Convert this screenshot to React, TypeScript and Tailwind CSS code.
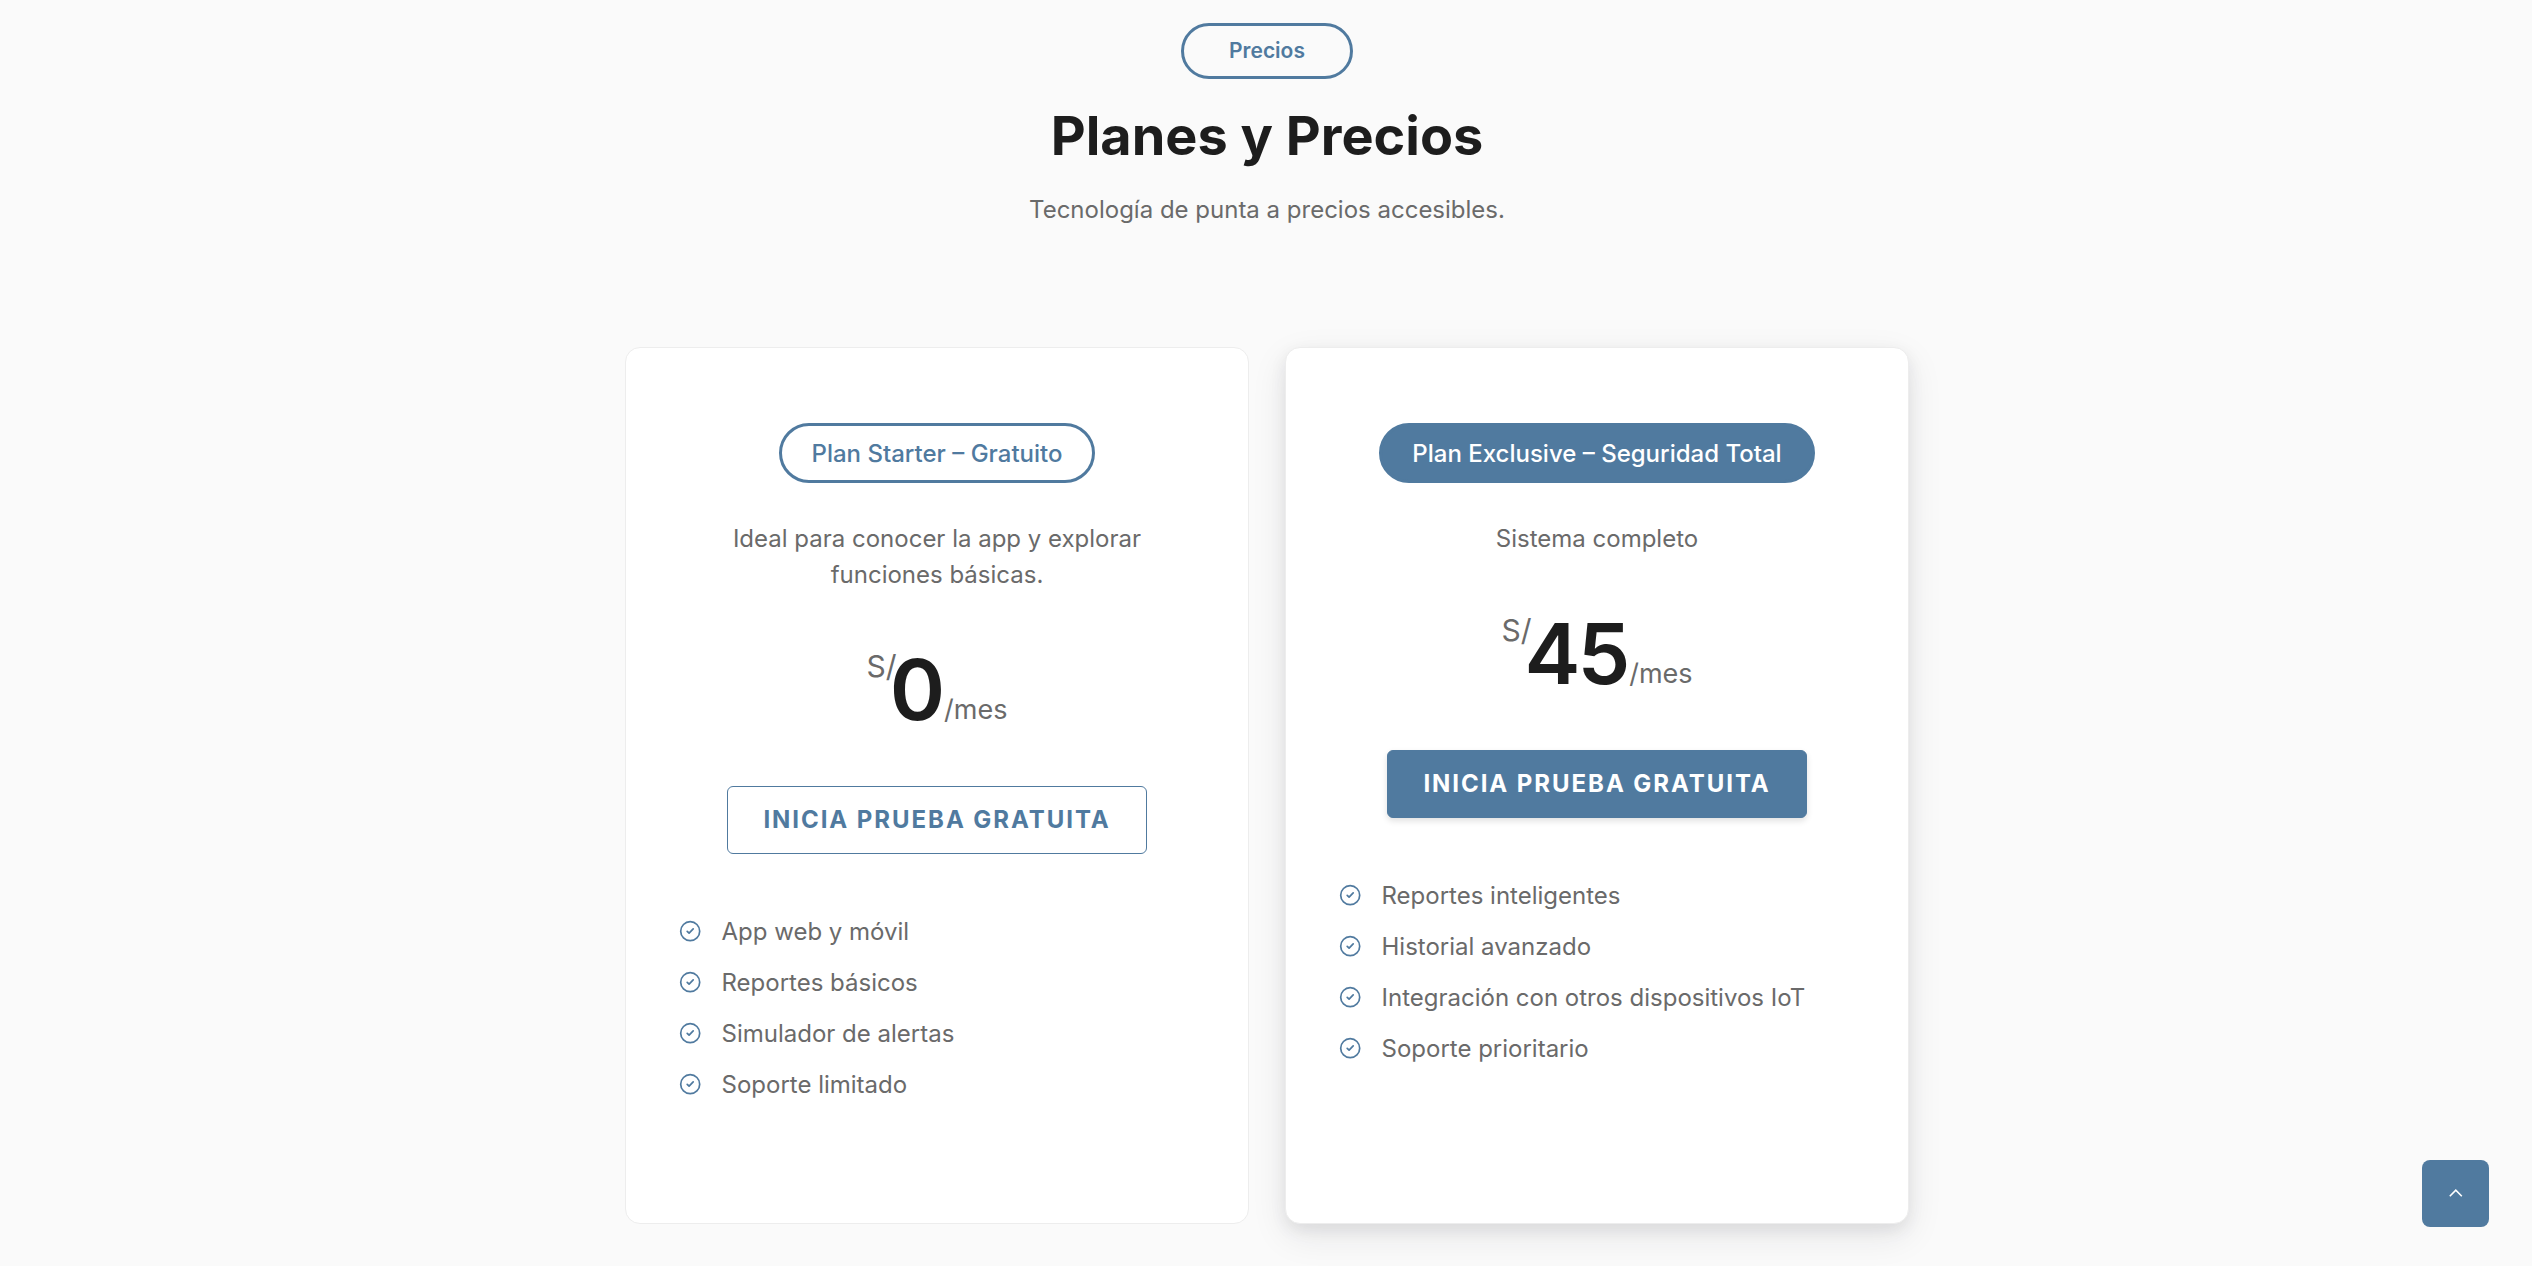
const CheckIcon = () => (
  <svg
    className="mb-0.5 h-6 w-6 shrink-0 text-[#507a9f]"
    viewBox="0 0 24 24"
    fill="none"
    stroke="currentColor"
    strokeWidth="1.7"
    strokeLinecap="round"
    strokeLinejoin="round"
  >
    <circle cx="12.2" cy="12.2" r="9.5" />
    <path d="M9.2 12.3l1.9 1.9 4.1-4.3" />
  </svg>
);

type Plan = {
  name: string;
  text: string;
  price: string;
  features: string[];
  featured?: boolean;
};

const plans: Plan[] = [
  {
    name: 'Plan Starter – Gratuito',
    text: 'Ideal para conocer la app y explorar funciones básicas.',
    price: '0',
    features: ['App web y móvil', 'Reportes básicos', 'Simulador de alertas', 'Soporte limitado'],
  },
  {
    name: 'Plan Exclusive – Seguridad Total',
    text: 'Sistema completo',
    price: '45',
    features: [
      'Reportes inteligentes',
      'Historial avanzado',
      'Integración con otros dispositivos IoT',
      'Soporte prioritario',
    ],
    featured: true,
  },
];

function PlanCard({ plan }: { plan: Plan }) {
  return (
    <article
      className={`flex h-[877px] w-[624px] flex-col items-center rounded-[15px] border border-[#ededed] bg-white px-[52px] pt-[75px] ${
        plan.featured ? 'shadow-[0_6px_16px_rgba(30,30,40,0.08),0_12px_36px_rgba(30,30,40,0.09)]' : ''
      }`}
    >
      <h3
        className={`flex h-[60px] items-center rounded-full border-[3px] border-[#507a9f] px-[30px] pt-0.5 text-2xl font-medium ${
          plan.featured ? 'bg-[#507a9f] text-white' : 'text-[#507a9f]'
        }`}
      >
        {plan.name}
      </h3>
      <p className="mt-[38px] w-[430px] text-center text-2xl leading-9 text-[#6a6a6a]">{plan.text}</p>
      <div className="mt-[46px] flex h-[100px] justify-center text-[#6a6a6a]">
        <span className="mt-[7px] -mr-[7px] text-[30px] leading-10">S/</span>
        <span className="mt-px text-[84px] leading-[100px] font-semibold tracking-[-3px] text-[#1d1d1d]">
          {plan.price}
        </span>
        <span className="mt-[51px] ml-0.5 text-[27px] leading-10">/mes</span>
      </div>
      <button
        className={`mt-[47px] flex h-[68px] w-[420px] shrink-0 items-center justify-center rounded-md border border-[#507a9f] text-2xl font-bold tracking-[1.94px] ${
          plan.featured ? 'bg-[#507a9f] text-white shadow-[0_3px_6px_rgba(0,0,0,0.12)]' : 'text-[#507a9f]'
        }`}
      >
        INICIA PRUEBA GRATUITA
      </button>
      <ul className="mt-[60px] flex w-full flex-col gap-[15px] text-2xl leading-9 text-[#6a6a6a]">
        {plan.features.map((feature) => (
          <li key={feature} className="flex items-center gap-[19.5px]">
            <CheckIcon />
            <span>{feature}</span>
          </li>
        ))}
      </ul>
    </article>
  );
}

export default function App() {
  return (
    <main className="relative flex h-[1266px] w-full flex-col items-center overflow-hidden bg-[#fafafa] pt-[23px] pl-[2px] font-['Inter',sans-serif]">
      <div className="flex h-14 w-[172px] items-center justify-center rounded-full border-[3px] border-[#507a9f] text-[21px] font-semibold text-[#507a9f]">
        Precios
      </div>
      <h2 className="mt-[24px] text-[54px] leading-[65px] font-bold text-[#1d1d1d]">Planes y Precios</h2>
      <p className="mt-[24px] text-2xl leading-9 text-[#6a6a6a]">Tecnología de punta a precios accesibles.</p>
      <div className="mt-[119px] flex gap-9">
        {plans.map((plan) => (
          <PlanCard key={plan.name} plan={plan} />
        ))}
      </div>
      <button
        aria-label="Volver arriba"
        className="absolute right-[43px] bottom-[39px] flex h-[67px] w-[67px] items-center justify-center rounded-lg bg-[#507a9f] text-white"
      >
        <svg className="h-6 w-6" viewBox="0 0 24 24" fill="none" stroke="currentColor" strokeWidth="1.6">
          <path d="M5.8 14.2l6-6 6 6" />
        </svg>
      </button>
    </main>
  );
}
